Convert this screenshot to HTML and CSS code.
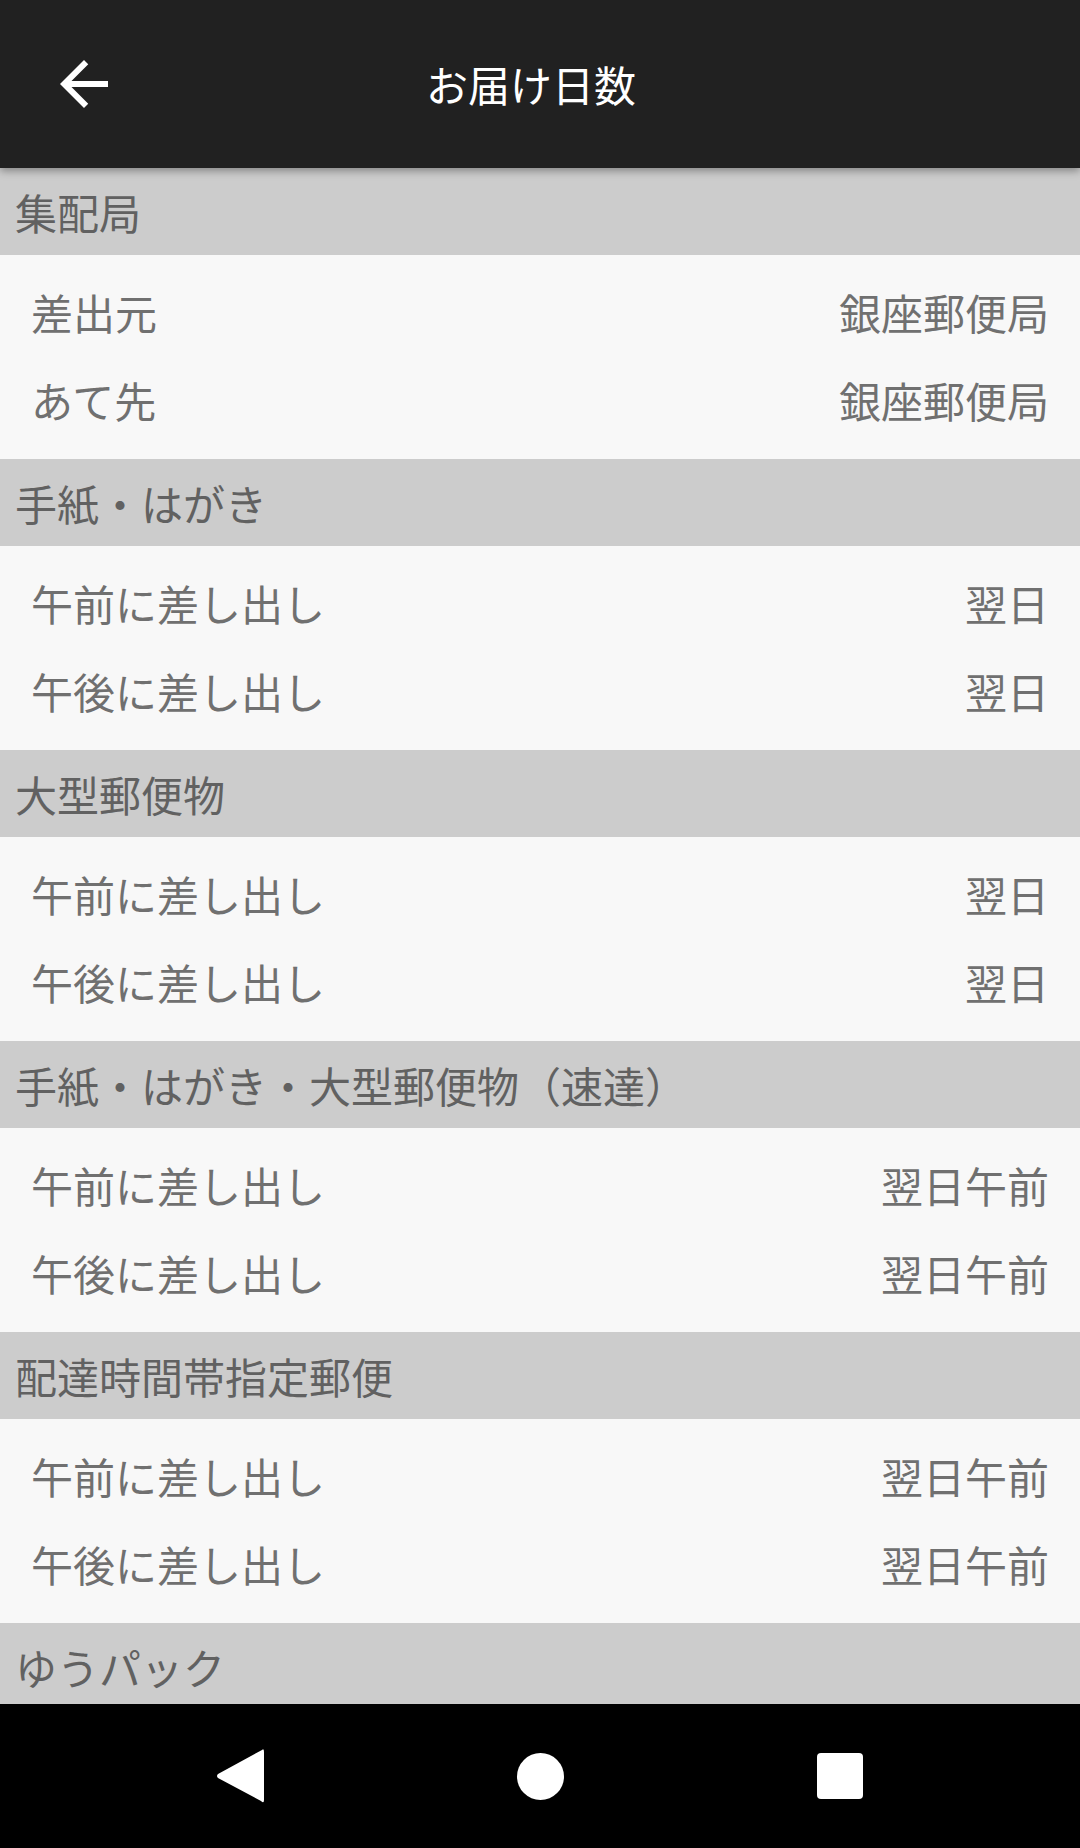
FILE: index.html
```html
<!DOCTYPE html>
<html lang="ja">
<head>
<meta charset="utf-8">
<title>お届け日数</title>
<link rel="stylesheet" href="styles.css">
</head>
<body>
<div class="screen">
  <header class="appbar">
    <span class="back">
      <svg viewBox="0 0 24 24" width="72" height="72"><path d="M20 11H7.83l5.59-5.59L12 4l-8 8 8 8 1.41-1.41L7.83 13H20v-2z" fill="#ffffff"/></svg>
    </span>
    <h1 class="title">お届け日数</h1>
  </header>
  <main class="list">
    <div class="section-head">集配局</div>
    <div class="section-body">
      <div class="row"><span>差出元</span><span>銀座郵便局</span></div>
      <div class="row"><span>あて先</span><span>銀座郵便局</span></div>
    </div>
    <div class="section-head">手紙・はがき</div>
    <div class="section-body">
      <div class="row"><span>午前に差し出し</span><span>翌日</span></div>
      <div class="row"><span>午後に差し出し</span><span>翌日</span></div>
    </div>
    <div class="section-head">大型郵便物</div>
    <div class="section-body">
      <div class="row"><span>午前に差し出し</span><span>翌日</span></div>
      <div class="row"><span>午後に差し出し</span><span>翌日</span></div>
    </div>
    <div class="section-head">手紙・はがき・大型郵便物（速達）</div>
    <div class="section-body">
      <div class="row"><span>午前に差し出し</span><span>翌日午前</span></div>
      <div class="row"><span>午後に差し出し</span><span>翌日午前</span></div>
    </div>
    <div class="section-head">配達時間帯指定郵便</div>
    <div class="section-body">
      <div class="row"><span>午前に差し出し</span><span>翌日午前</span></div>
      <div class="row"><span>午後に差し出し</span><span>翌日午前</span></div>
    </div>
    <div class="section-head">ゆうパック</div>
  </main>
  <nav class="navbar">
    <svg class="nav-back" viewBox="0 0 48 56" width="48" height="56"><path d="M46 2 Q48 0 48 4 L48 52 Q48 56 45 53 L2 30 Q0 28 2 26 Z" fill="#ffffff"/></svg>
    <span class="nav-home"></span>
    <span class="nav-recent"></span>
  </nav>
</div>
</body>
</html>
```
FILE: styles.css
```css
* { box-sizing: border-box; }
html, body {
  margin: 0;
  padding: 0;
  background: #f8f8f8;
}
body {
  font-family: "Noto Sans CJK JP", "Noto Sans", sans-serif;
}
.screen {
  width: 1080px;
  height: 1848px;
  display: flex;
  flex-direction: column;
  overflow: hidden;
}
.appbar {
  position: relative;
  z-index: 2;
  flex: 0 0 168px;
  height: 168px;
  background: #212121;
  display: flex;
  align-items: center;
  padding-left: 48px;
  box-shadow: 0 3px 8px rgba(0, 0, 0, 0.35);
}
.back {
  width: 72px;
  height: 72px;
  display: flex;
}
.title {
  flex: 1;
  margin: 0 138px 0 0;
  text-align: center;
  color: #ffffff;
  font-size: 42px;
  font-weight: 400;
  line-height: 60px;
}
.list {
  flex: 1;
  overflow: hidden;
  display: flex;
  flex-direction: column;
}
.section-head {
  flex: 0 0 87px;
  height: 87px;
  background: #cccccc;
  color: #616161;
  font-size: 42px;
  line-height: 87px;
  padding-left: 15px;
  white-space: nowrap;
}
.section-body {
  flex: 0 0 204px;
  background: #f8f8f8;
  padding: 13px 0 15px;
}
.row {
  height: 88px;
  display: flex;
  justify-content: space-between;
  align-items: center;
  padding: 0 31px 0 31px;
  color: #707070;
  font-size: 42px;
  line-height: 88px;
}
.navbar {
  flex: 0 0 144px;
  height: 144px;
  background: #000000;
  display: grid;
  grid-template-columns: 216px 48px 253px 47px 253px 46px 217px;
  align-items: center;
}
.nav-back {
  grid-column: 2;
}
.nav-home {
  grid-column: 4;
  width: 47px;
  height: 47px;
  border-radius: 50%;
  background: #ffffff;
}
.nav-recent {
  grid-column: 6;
  width: 46px;
  height: 46px;
  border-radius: 4px;
  background: #ffffff;
}
```
